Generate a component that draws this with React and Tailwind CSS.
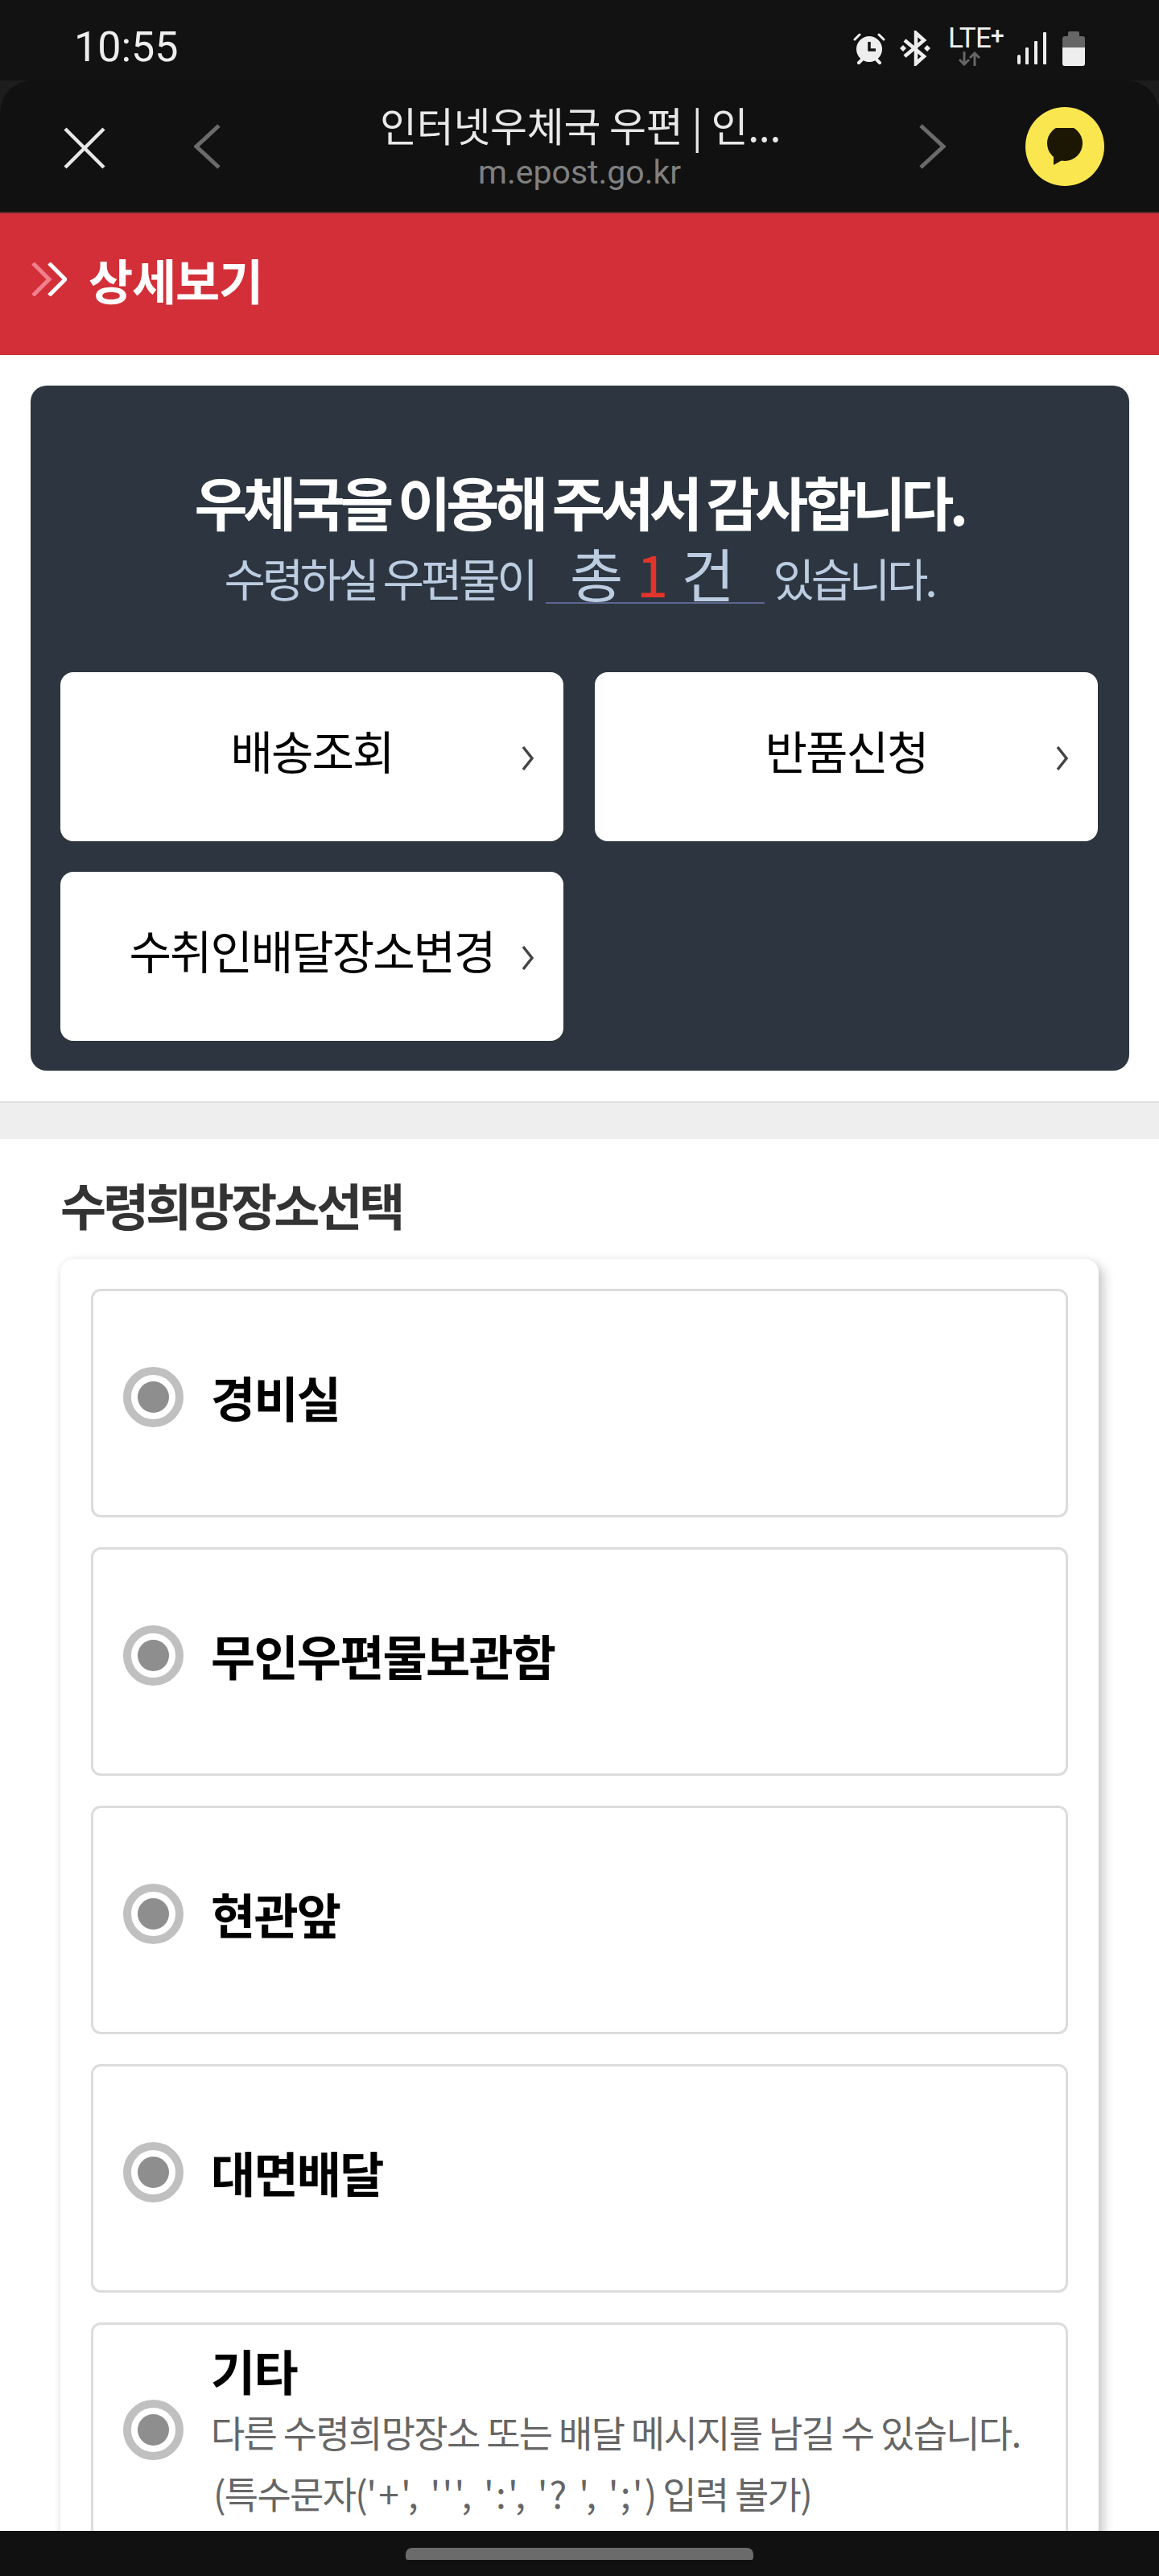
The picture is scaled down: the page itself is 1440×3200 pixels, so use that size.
const KR = "font-['Noto_Sans_CJK_KR','Noto_Sans',sans-serif]"

const PLACES = ['경비실', '무인우편물보관함', '현관앞', '대면배달']

function Radio({ className = '' }) {
  return (
    <span className={`flex h-[75px] w-[75px] shrink-0 items-center justify-center rounded-full border-[10px] border-[#c0c0c0] bg-white ${className}`}>
      <span className="h-[39px] w-[39px] rounded-full bg-[#8e8e8e]" />
    </span>
  )
}

function ActionButton({ label }) {
  return (
    <button className="relative flex h-[210px] items-center justify-center rounded-[16px] bg-white pb-[18px]">
      <span className="text-[57px] leading-none tracking-[-2px] text-black">{label}</span>
      <svg className="absolute right-[35px] top-[90px] h-[34px] w-[18px]" viewBox="0 0 18 34" fill="none" stroke="#444" strokeWidth="3.5">
        <path d="M3 3l11 14L3 31" />
      </svg>
    </button>
  )
}

function StatusIcons() {
  return (
    <div className="flex items-center">
      {/* alarm */}
      <svg className="h-[40px] w-[40px]" viewBox="0 0 40 40">
        <circle cx="20" cy="21" r="16" fill="#eee" />
        <path d="M20 12v10h8" fill="none" stroke="#121212" strokeWidth="3.5" />
        <path d="M2 9l6-6M38 9l-6-6" stroke="#eee" strokeWidth="3" strokeLinecap="round" />
        <path d="M7 38l4-4M33 38l-4-4" stroke="#eee" strokeWidth="4" strokeLinecap="round" />
      </svg>
      {/* bluetooth */}
      <svg className="ml-[18px] h-[44px] w-[38px]" viewBox="0 0 38 44" fill="none" stroke="#eee" strokeWidth="4.5">
        <path d="M6 12l24 20-10 9V3l10 9L6 32" />
        <path d="M0 22l4-4 4 4-4 4zM30 22l4-4 4 4-4 4z" fill="#eee" stroke="none" />
      </svg>
      {/* lte */}
      <div className="relative ml-[22px] h-[44px] w-[71px]">
        <span className="absolute left-0 top-[-8px] font-['Roboto',sans-serif] text-[35px] leading-[36px] tracking-[-0.5px] text-[#eee]">LTE</span>
        <span className="absolute left-[53px] top-[-12px] font-['Roboto',sans-serif] text-[30px] font-medium leading-[36px] text-[#eee]">+</span>
        <svg className="absolute left-[12px] top-[26px] h-[18px] w-[28px]" viewBox="0 0 28 18" fill="none" stroke="#666" strokeWidth="3">
          <path d="M8 0v16M2 10l6 6 6-6M21 18V2M15 8l6-6 6 6" />
        </svg>
      </div>
      {/* signal */}
      <svg className="ml-[15px] h-[40px] w-[36px]" viewBox="0 0 36 40" fill="#eee">
        <rect x="0" y="28" width="4" height="12" rx="2" />
        <rect x="10" y="19" width="4" height="21" rx="1" />
        <rect x="21" y="11" width="4" height="29" rx="1" />
        <rect x="32" y="0" width="4" height="40" rx="1" />
      </svg>
      {/* battery */}
      <svg className="ml-[20px] h-[43px] w-[28px]" viewBox="0 0 28 43">
        <path d="M9 0h10a2 2 0 0 1 2 2v4h4a3 3 0 0 1 3 3v11H0V9a3 3 0 0 1 3-3h4V2a2 2 0 0 1 2-2z" fill="#666" />
        <path d="M0 20h28v20a3 3 0 0 1-3 3H3a3 3 0 0 1-3-3z" fill="#eee" />
      </svg>
    </div>
  )
}

export default function App() {
  return (
    <div className={`relative h-[3200px] w-[1440px] overflow-hidden bg-white ${KR}`}>
      {/* status + browser toolbar */}
      <div className="bg-[#121212]">
        <div className="flex h-[100px] items-start justify-between pl-[92px] pr-[92px] pt-[29px]">
          <span className="font-['Roboto',sans-serif] text-[52px] leading-[60px] text-[#eee]">10:55</span>
          <div className="pt-[9px]">
            <StatusIcons />
          </div>
        </div>
        <div className="bg-[#1d1d1d]">
          <div className="relative flex h-[165px] rounded-t-[40px] border-b-[2px] border-[#5b2a2e] bg-[#111]">
            <svg className="ml-[79px] mt-[58px] h-[52px] w-[52px]" viewBox="0 0 52 52" stroke="#e8e8e8" strokeWidth="4.5" fill="none">
              <path d="M2 2l48 48M50 2L2 50" />
            </svg>
            <svg className="ml-[110px] mt-[54px] h-[56px] w-[33px]" viewBox="0 0 33 56" stroke="#6a6a6a" strokeWidth="5" fill="none">
              <path d="M31 2L3 28l28 26" />
            </svg>
            <div className="flex-1 pl-[198px] pt-[24px]">
              <div className="whitespace-nowrap text-[50px] leading-[60px] tracking-[-0.3px] text-[#e8e8e8]">인터넷우체국 우편 | 인...</div>
              <div className="ml-[122px] mt-[5px] font-['Roboto',sans-serif] text-[41px] leading-[50px] text-[#808080]">m.epost.go.kr</div>
            </div>
            <svg className="absolute left-[1142px] top-[54px] h-[56px] w-[33px]" viewBox="0 0 33 56" stroke="#6a6a6a" strokeWidth="5" fill="none">
              <path d="M2 2l28 26L2 54" />
            </svg>
            <span className="absolute left-[1274px] top-[33px] flex h-[98px] w-[98px] items-center justify-center rounded-full bg-[#fae64e]">
              <svg className="h-[46px] w-[46px]" viewBox="0 0 46 46" fill="#1c1705">
                <circle cx="23" cy="19" r="22" />
                <path d="M9 30v16l14-8z" />
              </svg>
            </span>
          </div>
        </div>
      </div>

      {/* page title */}
      <div className="flex h-[176px] items-center bg-[#d32f38] pb-[12px] pl-[39px]">
        <svg className="h-[42px] w-[44px]" viewBox="0 0 44 42" fill="none" strokeWidth="5">
          <path d="M2 1l20 20L2 41" stroke="#f0808e" />
          <path d="M22 1l20 20-20 20" stroke="#fff" />
        </svg>
        <h1 className="ml-[27px] text-[60px] font-bold leading-none tracking-[-1.2px] text-white">상세보기</h1>
      </div>

      {/* summary card */}
      <div className="ml-[38px] mt-[38px] h-[851px] w-[1365px] rounded-[20px] bg-[#2d3640] pl-[37px] pr-[39px] pt-[105px]">
        <p className="text-center text-[72px] font-bold leading-[76px] tracking-[-5.8px] text-white">우체국을 이용해 주셔서 감사합니다.</p>
        <div className="mt-[14px] flex h-[76px] items-end justify-center text-[56px] leading-[66px] tracking-[-4.3px] text-[#bccde2]">
          <span>수령하실 우편물이</span>
          <span className="ml-[14px] mr-[10px] flex h-[76px] w-[272px] items-center justify-center border-b-[2px] border-[#5c6590] pr-[8px] text-[72px] leading-[72px] tracking-normal">
            총&nbsp;<span className="text-[#e2342b]">1</span>&nbsp;건
          </span>
          <span>있습니다.</span>
        </div>
        <div className="mt-[85px] grid grid-cols-2 gap-x-[39px] gap-y-[38px]">
          <ActionButton label="배송조회" />
          <ActionButton label="반품신청" />
          <ActionButton label="수취인배달장소변경" />
        </div>
      </div>

      <div className="mt-[38px] h-[47px] border-t-[2px] border-[#e0e0e0] bg-[#eeeeee]" />

      {/* pickup place */}
      <h2 className="ml-[75px] mt-[46px] text-[62px] font-bold leading-[70px] tracking-[-4px] text-[#333]">수령희망장소선택</h2>
      <div className="ml-[75px] mt-[33px] h-[1700px] w-[1290px] rounded-[16px] bg-white px-[38px] pt-[37px] shadow-[6px_6px_14px_rgba(0,0,0,0.22),-1px_0_6px_rgba(0,0,0,0.06)]">
        <div className="flex flex-col gap-[37px]">
          {PLACES.map((place) => (
            <div key={place} className="flex h-[284px] items-center rounded-[12px] border-[3px] border-[#dcdcdc] pb-[16px] pl-[37px]">
              <Radio />
              <span className="ml-[34px] text-[60px] font-bold leading-none tracking-[-1.8px] text-black">{place}</span>
            </div>
          ))}
          <div className="flex h-[340px] items-start rounded-[12px] border-[3px] border-[#dcdcdc] pl-[37px]">
            <Radio className="mt-[93px]" />
            <div className="ml-[34px] pt-[18px]">
              <div className="text-[60px] font-bold leading-[76px] tracking-[-1.8px] text-black">기타</div>
              <div className="text-[46px] leading-[76px] tracking-[-1.7px] text-[#666]">다른 수령희망장소 또는 배달 메시지를 남길 수 있습니다.</div>
              <div className="pl-[3px] text-[46px] leading-[76px] tracking-[-1.7px] text-[#666]">
                (특수문자(<span className="tracking-[2.2px]">'+', ''', ':', '? ', ';'</span>) 입력 불가)
              </div>
            </div>
          </div>
        </div>
      </div>

      {/* android nav bar */}
      <div className="absolute bottom-0 left-0 flex h-[56px] w-full justify-center bg-[#111] pt-[21px]">
        <span className="h-[15px] w-[432px] rounded-t-[8px] rounded-b-[3px] bg-[#6b6b6b]" />
      </div>
    </div>
  )
}
